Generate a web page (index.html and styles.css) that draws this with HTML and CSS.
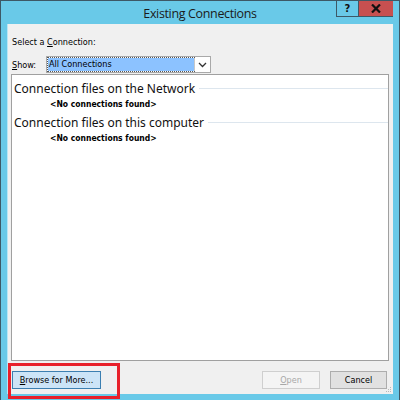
FILE: index.html
```html
<!DOCTYPE html>
<html>
<head>
<meta charset="utf-8">
<link rel="stylesheet" href="styles.css">
</head>
<body>
<div class="window">
  <div class="titlebar">
    <div class="title">Existing Connections</div>
    <div class="tbtns">
      <div class="help">?</div>
      <div class="close"><svg width="10" height="9" viewBox="0 0 10 9"><path d="M1 0.5 L9 8.5 M9 0.5 L1 8.5" stroke="#111" stroke-width="2.2"/></svg></div>
    </div>
  </div>
  <div class="client">
    <div class="label sel">Select a <u>C</u>onnection:</div>
    <div class="showrow">
      <span class="label showlbl"><u>S</u>how:</span>
      <div class="combo">
        <div class="combo-val"><span class="focus">All Connections</span></div>
        <div class="combo-btn"><svg width="9" height="6" viewBox="0 0 9 6"><path d="M1 1 L4.5 4.5 L8 1" fill="none" stroke="#333" stroke-width="1.3"/></svg></div>
      </div>
    </div>
    <div class="list">
      <div class="group"><span class="gtitle">Connection files on the Network</span><span class="gline"></span></div>
      <div class="none">&lt;No connections found&gt;</div>
      <div class="group"><span class="gtitle">Connection files on this computer</span><span class="gline"></span></div>
      <div class="none">&lt;No connections found&gt;</div>
    </div>
    <div class="footer">
      <button class="btn browse"><u>B</u>rowse for More...</button>
      <div class="right">
        <button class="btn disabled"><u>O</u>pen</button>
        <button class="btn cancel">Cancel</button>
      </div>
    </div>
    <svg class="grip" width="6" height="6" viewBox="0 0 6 6"><g fill="#b8b8b8"><rect x="4" y="0" width="1" height="1"/><rect x="2" y="2" width="1" height="1"/><rect x="4" y="2" width="1" height="1"/><rect x="0" y="4" width="1" height="1"/><rect x="2" y="4" width="1" height="1"/><rect x="4" y="4" width="1" height="1"/></g></svg>
  </div>
  <div class="highlight"></div>
</div>
</body>
</html>
```
FILE: styles.css
```css
html, body { margin: 0; padding: 0; }
body { width: 400px; height: 400px; overflow: hidden; background: #69c9e8; }
.window {
  box-sizing: border-box;
  width: 400px; height: 400px;
  background: #69c9e8;
  border: 1px solid #3d5866;
  border-bottom: none;
  display: flex; flex-direction: column;
  padding: 0 6px 6px 6px;
  position: relative;
  overflow: hidden;
}
.titlebar {
  height: 23px; flex: none;
  display: flex; align-items: flex-start; justify-content: center;
  position: relative;
}
.title {
  font-family: "Open Sans", "Noto Sans", sans-serif;
  font-size: 12.5px; color: #1b1b1b;
  line-height: 25px; letter-spacing: -0.35px;
}
.tbtns { position: absolute; right: 0; top: -1px; display: flex; }
.help {
  width: 22px; height: 17px; box-sizing: border-box;
  border: 1px solid #3d5866; border-top: none; border-right: none;
  background: #69c9e8;
  font: bold 10px "DejaVu Sans", sans-serif; color: #111;
  display: flex; align-items: center; justify-content: center;
}
.close {
  width: 35px; height: 17px; box-sizing: border-box;
  border: 1px solid #3d5866; border-top: none; border-right: none;
  background: #c75050;
  display: flex; align-items: center; justify-content: center;
}
.client {
  flex: none;
  width: 386px; height: 370px; box-sizing: border-box;
  background: #f0f0f0;
  border-left: 1px solid #b9e6f5;
  display: flex; flex-direction: column;
  padding: 0 4px 0 3px;
  position: relative;
}
.label {
  font-family: "DejaVu Sans Condensed", "DejaVu Sans", sans-serif;
  font-size: 9px; color: #000;
}
.sel { margin-top: 12px; height: 13px; line-height: 13px; padding-left: 1px; }
.showrow { display: flex; align-items: center; margin-top: 7px; height: 17px; }
.showlbl { width: 34px; padding-left: 1px; }
.combo {
  width: 165px; height: 17px; box-sizing: border-box;
  border: 1px solid #a9a9a9; background: #fff;
  display: flex; padding: 1px;
}
.combo-val {
  flex: 1; background: #8cc2ff;
  display: flex; align-items: center;
}
.focus {
  font-family: "DejaVu Sans Condensed", "DejaVu Sans", sans-serif; font-size: 9px;
  color: #000; padding-left: 1px; outline: 1px dotted #555; outline-offset: 0;
  flex: 1; height: 13px; line-height: 13px;
}
.combo-btn {
  width: 14px; display: flex; align-items: center; justify-content: center;
  border-left: 1px solid #c8c8c8;
}
.list {
  margin-top: 1px;
  height: 287px; width: 378px; box-sizing: border-box;
  border: 1px solid #a0a0a0; background: #fff;
  padding-top: 4px;
}
.group { display: flex; align-items: center; padding-left: 2px; height: 18px; }
.gtitle {
  font-family: "Noto Sans", "Open Sans", sans-serif; font-size: 12px; color: #111;
  white-space: nowrap;
}
.gline { flex: 1; height: 1px; background: #dde6ee; margin-left: 4px; margin-top: 1px; }
.none {
  font-family: "DejaVu Sans Condensed", "DejaVu Sans", sans-serif; font-weight: bold; font-size: 8.5px;
  color: #000; padding-left: 38px; height: 16px; line-height: 14px;
}
.footer { display: flex; justify-content: space-between; align-items: center; margin-top: 10px; padding-left: 1px; }
.btn {
  font-family: "DejaVu Sans Condensed", "DejaVu Sans", sans-serif; font-size: 9px; color: #000;
  height: 18px; box-sizing: border-box; padding: 0; margin: 0;
  display: flex; align-items: center; justify-content: center;
}
.browse { width: 89px; background: #cce4f7; border: 1px solid #3c7fb1; }
.right { display: flex; gap: 10px; margin-right: 2px; }
.disabled { width: 58px; background: #f4f4f4; border: 1px solid #cfcfcf; color: #a8a8a8; }
.cancel { width: 57px; background: #e1e1e1; border: 1px solid #adadad; }
.grip { position: absolute; right: 1px; bottom: 1px; }
.highlight {
  position: absolute; left: 7px; top: 362px;
  width: 112px; height: 36px; box-sizing: border-box;
  border: 3px solid #e8202a;
}
```
